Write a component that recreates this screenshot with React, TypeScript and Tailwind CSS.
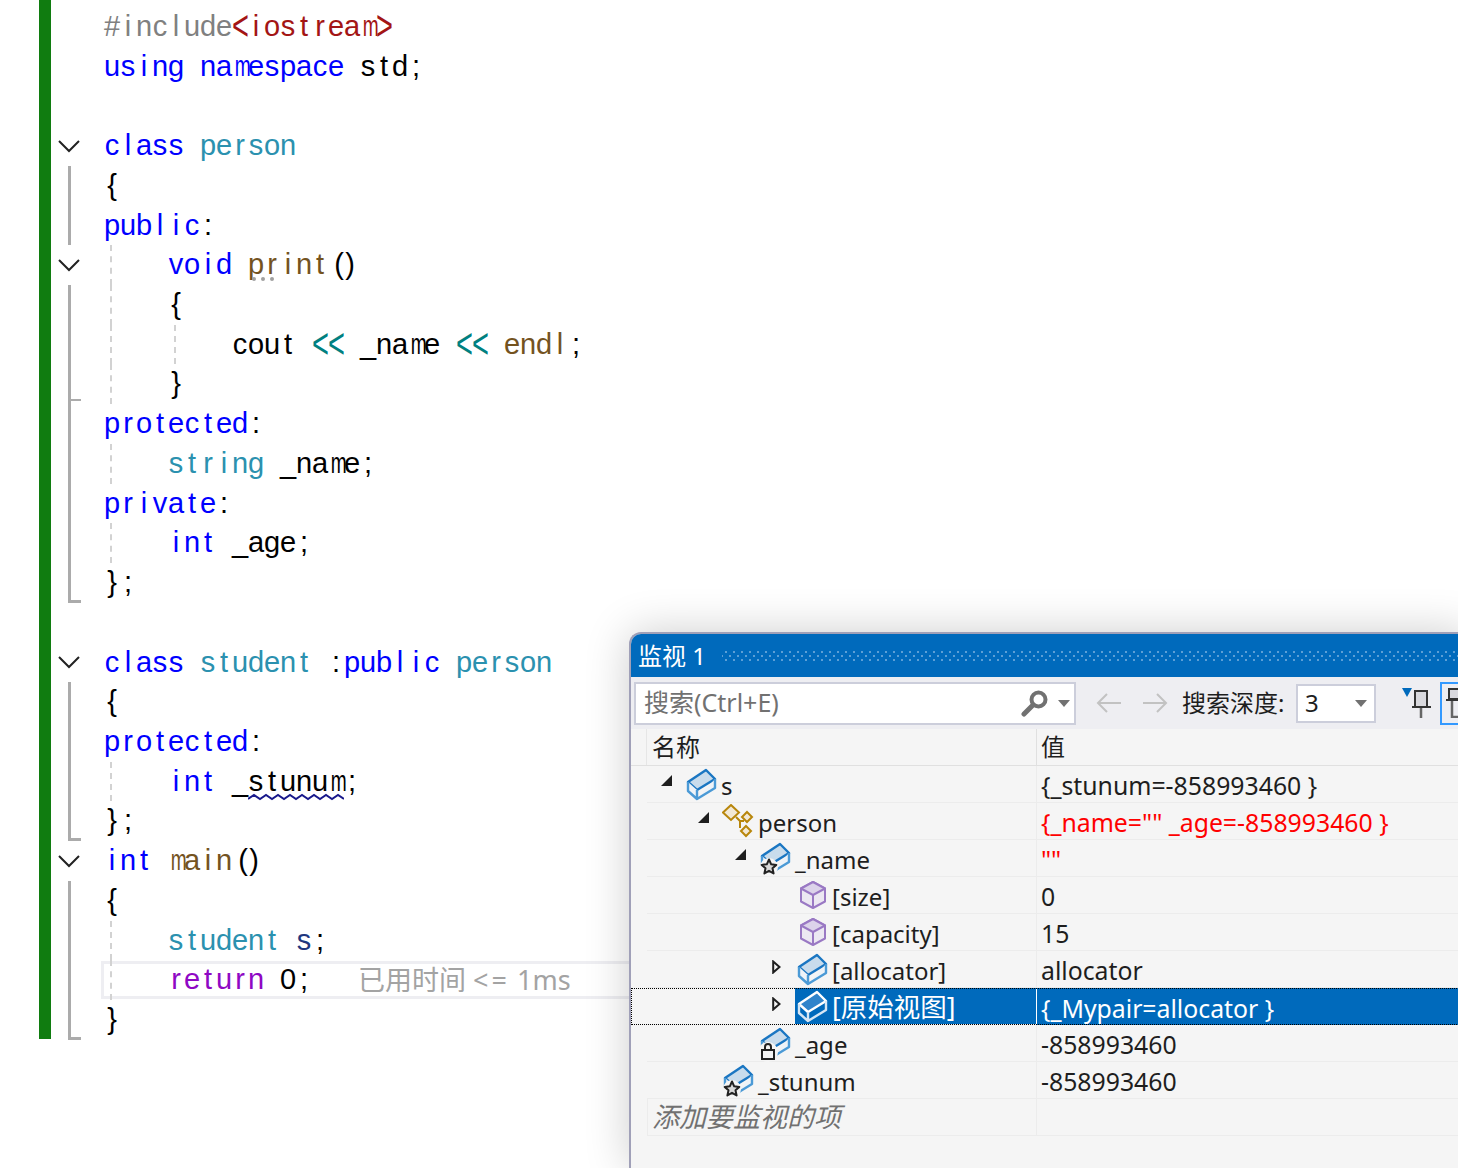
const KW = "text-[#0000ff]";
const TYPE = "text-[#2b91af]";
const FN = "text-[#74531f]";
const OP = "text-[#008080]";
const PLAIN = "text-black";

type Tok = { t: string; c?: string; deco?: "dots" | "squiggle" };
type Line = { fold?: "open" | "v" | "tick" | "end"; guides?: number; toks: Tok[]; current?: boolean };

const lines: Line[] = [
  { toks: [{ t: "#include", c: "text-[#808080]" }, { t: "<iostream>", c: "text-[#a31515]" }] },
  { toks: [{ t: "using namespace", c: KW }, { t: " std;" }] },
  { toks: [] },
  { fold: "open", toks: [{ t: "class", c: KW }, { t: " " }, { t: "person", c: TYPE }] },
  { fold: "v", toks: [{ t: "{" }] },
  { fold: "v", toks: [{ t: "public", c: KW }, { t: ":" }] },
  { fold: "open", guides: 1, toks: [{ t: "    " }, { t: "void", c: KW }, { t: " " }, { t: "pr", c: FN, deco: "dots" }, { t: "int", c: FN }, { t: "()" }] },
  { fold: "v", guides: 1, toks: [{ t: "    {" }] },
  { fold: "v", guides: 2, toks: [{ t: "        cout " }, { t: "<<", c: OP }, { t: " _name " }, { t: "<<", c: OP }, { t: " " }, { t: "endl", c: FN }, { t: ";" }] },
  { fold: "tick", guides: 1, toks: [{ t: "    }" }] },
  { fold: "v", toks: [{ t: "protected", c: KW }, { t: ":" }] },
  { fold: "v", guides: 1, toks: [{ t: "    " }, { t: "string", c: TYPE }, { t: " _name;" }] },
  { fold: "v", toks: [{ t: "private", c: KW }, { t: ":" }] },
  { fold: "v", guides: 1, toks: [{ t: "    " }, { t: "int", c: KW }, { t: " _age;" }] },
  { fold: "end", toks: [{ t: "};" }] },
  { toks: [] },
  { fold: "open", toks: [{ t: "class", c: KW }, { t: " " }, { t: "student", c: TYPE }, { t: " :" }, { t: "public", c: KW }, { t: " " }, { t: "person", c: TYPE }] },
  { fold: "v", toks: [{ t: "{" }] },
  { fold: "v", toks: [{ t: "protected", c: KW }, { t: ":" }] },
  { fold: "v", guides: 1, toks: [{ t: "    " }, { t: "int", c: KW }, { t: " _" }, { t: "stunum", deco: "squiggle" }, { t: ";" }] },
  { fold: "end", toks: [{ t: "};" }] },
  { fold: "open", toks: [{ t: "int", c: KW }, { t: " " }, { t: "main", c: FN }, { t: "()" }] },
  { fold: "v", toks: [{ t: "{" }] },
  { fold: "v", guides: 1, toks: [{ t: "    " }, { t: "student", c: TYPE }, { t: " " }, { t: "s", c: "text-[#1f377f]" }, { t: ";" }] },
  { fold: "v", guides: 1, current: true, toks: [{ t: "    " }, { t: "return", c: "text-[#8f08c4]" }, { t: " 0;" }] },
  { fold: "end", toks: [{ t: "}" }] },
];

function Fold({ kind }: { kind?: Line["fold"] }) {
  if (kind === "open") {
    return (
      <svg width="24" height="14" viewBox="0 0 24 14" className="ml-[6px]">
        <path d="M2 2 L12 12 L22 2" fill="none" stroke="#222222" strokeWidth="2" />
      </svg>
    );
  }
  if (kind === "v") return <div className="ml-[17px] h-full w-[3px] bg-[#ababab]" />;
  if (kind === "tick") {
    return (
      <div className="ml-[17px] h-full w-[13px] border-l-[3px] border-[#ababab]">
        <div className="mt-[35px] h-[2px] bg-[#ababab]" />
      </div>
    );
  }
  if (kind === "end") return <div className="ml-[17px] h-full w-[13px] border-b-[3px] border-l-[3px] border-[#ababab]" />;
  return null;
}

function Squiggle() {
  return (
    <svg width="96" height="8" viewBox="0 0 96 8" className="absolute left-0 top-[31px]">
      <path
        d="M0 6 L6 2 L12 6 L18 2 L24 6 L30 2 L36 6 L42 2 L48 6 L54 2 L60 6 L66 2 L72 6 L78 2 L84 6 L90 2 L96 6"
        fill="none"
        stroke="#1a1a8c"
        strokeWidth="2"
      />
    </svg>
  );
}

// the editor font sits every glyph in a 16px cell, a few glyphs need nudging to fit
function cellClass(ch: string) {
  if (ch === "m") return "scale-x-[0.66]";
  if (ch === "<" || ch === ">") return "scale-y-[1.45] font-light";
  if (ch === "(") return "translate-x-[3px]";
  if (ch === ")") return "-translate-x-[2px]";
  return "";
}

function Cells({ text }: { text: string }) {
  return (
    <>
      {text.split("").map((ch, i) => (
        <span key={i} className={`inline-block w-[16px] text-center ${cellClass(ch)}`}>
          {ch}
        </span>
      ))}
    </>
  );
}

function Editor() {
  return (
    <div className="ml-[39px] h-[1039px] border-l-[12px] border-[#107c10] pt-[7px] font-['Liberation_Sans',sans-serif] text-[29px] leading-[39.72px] whitespace-pre">
      {lines.map((line, i) => (
        <div key={i} className="flex h-[39.72px] items-center">
          <div className="flex h-full w-[53px] shrink-0 items-center">
            <Fold kind={line.fold} />
          </div>
          <div className="relative flex h-full flex-1 items-center">
            {line.current && <div className="absolute inset-y-[1px] -left-[3px] right-0 border-y-[3px] border-l-[3px] border-[#eeeef2]" />}
            {line.guides && <div className="absolute inset-y-0 left-[6px] border-l-2 border-dashed border-[#d2d2d2]" />}
            {line.guides === 2 && <div className="absolute inset-y-0 left-[70px] border-l-2 border-dashed border-[#d2d2d2]" />}
            <div className="relative">
              {line.toks.map((tok, j) => (
                <span key={j} className={`relative inline-block ${tok.c ?? PLAIN}`}>
                  <Cells text={tok.t} />
                  {tok.deco === "squiggle" && <Squiggle />}
                  {tok.deco === "dots" && (
                    <span className="absolute left-[4px] top-[32px] flex gap-[5px]">
                      <span className="size-[4px] rounded-full bg-[#a0a0a0]" />
                      <span className="size-[4px] rounded-full bg-[#a0a0a0]" />
                      <span className="size-[4px] rounded-full bg-[#a0a0a0]" />
                    </span>
                  )}
                </span>
              ))}
            </div>
            {line.current && (
              <span className="relative ml-[46px] font-['Noto_Sans','Noto_Sans_CJK_SC',sans-serif] text-[27px] text-[#a3a3a3]">
                已用时间 <span className="tracking-[3px]">&lt;=</span> 1ms
              </span>
            )}
          </div>
        </div>
      ))}
    </div>
  );
}

function Box({ selected, badge }: { selected?: boolean; badge?: "star" | "lock" }) {
  const top = selected ? "#2f84cb" : "#c9dcec";
  const stroke = selected ? "#ffffff" : "#1a76c2";
  const side = selected ? "#d5e6f5" : "#4b9ad6";
  return (
    <svg width="30" height="32" viewBox="0 0 30 32" className="mt-[1px] overflow-visible">
      <polygon points="1,13 19,1 28,10 10,21" fill={top} stroke={stroke} strokeWidth="2.4" strokeLinejoin="round" />
      <path d="M1 13 V22 L10 30 V21 M10 30 L28 19 V10" fill={selected ? "none" : "#eef3f8"} stroke={side} strokeWidth="2.4" strokeLinejoin="round" />
      {badge === "star" && (
        <g>
          <circle cx="8" cy="24" r="9" fill="#f5f5f5" />
          <polygon
            points="8,16.5 10.2,21.3 15.3,21.9 11.5,25.3 12.6,30.4 8,27.8 3.4,30.4 4.5,25.3 0.7,21.9 5.8,21.3"
            fill="#d9d9d9"
            stroke="#222222"
            strokeWidth="2"
            strokeLinejoin="round"
          />
        </g>
      )}
      {badge === "lock" && (
        <g>
          <circle cx="7" cy="24" r="10" fill="#f5f5f5" />
          <rect x="1" y="22" width="12" height="9" fill="#f5f5f5" stroke="#222222" strokeWidth="2" />
          <path d="M4 22 V19 A3 3 0 0 1 10 19 V22" fill="none" stroke="#222222" strokeWidth="2" />
        </g>
      )}
    </svg>
  );
}

function Cube() {
  return (
    <svg width="26" height="28" viewBox="0 0 26 28" className="ml-[2px]">
      <polygon points="13,1 25,7.5 25,20.5 13,27 1,20.5 1,7.5" fill="#ece8f2" stroke="#9a79c4" strokeWidth="2" strokeLinejoin="round" />
      <polygon points="1,7.5 13,14 25,7.5 13,1" fill="#dcd3ea" stroke="#9a79c4" strokeWidth="2" strokeLinejoin="round" />
      <path d="M13 14 V27" stroke="#9a79c4" strokeWidth="2" />
    </svg>
  );
}

function BaseClass() {
  return (
    <svg width="32" height="34" viewBox="0 0 32 34" className="-ml-[2px] shrink-0">
      <path d="M14 13 L18 17 V24 M18 17 H22" fill="none" stroke="#b8860b" strokeWidth="2" />
      <polygon points="9,1 17,8.5 9,16 1,8.5" fill="#f2e8d5" stroke="#b8860b" strokeWidth="2" />
      <polygon points="25,8 30,13 25,18 20,13" fill="#f2e8d5" stroke="#b8860b" strokeWidth="2" />
      <polygon points="24,22 29,27 24,32 19,27" fill="#f2e8d5" stroke="#b8860b" strokeWidth="2" />
    </svg>
  );
}

type Row = {
  indent: string;
  tri?: "open" | "closed";
  icon: "box" | "star" | "lock" | "cube" | "base";
  name: string;
  value: string;
  red?: boolean;
  selected?: boolean;
};

const rows: Row[] = [
  { indent: "pl-[14px]", tri: "open", icon: "box", name: "s", value: "{_stunum=-858993460 }" },
  { indent: "pl-[51px]", tri: "open", icon: "base", name: "person", value: '{_name="" _age=-858993460 }', red: true },
  { indent: "pl-[88px]", tri: "open", icon: "star", name: "_name", value: '""', red: true },
  { indent: "pl-[125px]", icon: "cube", name: "[size]", value: "0" },
  { indent: "pl-[125px]", icon: "cube", name: "[capacity]", value: "15" },
  { indent: "pl-[125px]", tri: "closed", icon: "box", name: "[allocator]", value: "allocator" },
  { indent: "pl-[125px]", tri: "closed", icon: "box", name: "[原始视图]", value: "{_Mypair=allocator }", selected: true },
  { indent: "pl-[88px]", icon: "lock", name: "_age", value: "-858993460" },
  { indent: "pl-[51px]", icon: "star", name: "_stunum", value: "-858993460" },
];

function Triangle({ kind }: { kind?: Row["tri"] }) {
  if (kind === "open") {
    return (
      <svg width="12" height="12" viewBox="0 0 12 12" className="-mt-[6px]">
        <polygon points="11,0 11,11 0,11" fill="#1e1e1e" />
      </svg>
    );
  }
  if (kind === "closed") {
    return (
      <svg width="9" height="14" viewBox="0 0 9 14" className="-mt-[4px]">
        <polygon points="1.2,1.5 7.5,7 1.2,12.5" fill="none" stroke="#1e1e1e" strokeWidth="2" />
      </svg>
    );
  }
  return null;
}

function RowIcon({ row }: { row: Row }) {
  if (row.icon === "cube") return <Cube />;
  if (row.icon === "base") return <BaseClass />;
  if (row.icon === "star") return <Box badge="star" />;
  if (row.icon === "lock") return <Box badge="lock" />;
  return <Box selected={row.selected} />;
}

function WatchRow({ row }: { row: Row }) {
  return (
    <div className={`flex h-[37px] shrink-0 pl-[16px] ${row.selected ? "outline-1 -outline-offset-1 outline-dotted outline-black" : ""}`}>
      <div className={`flex h-full w-[389px] shrink-0 items-stretch border-b border-[#ececec] ${row.indent}`}>
        <div className="flex w-[23px] shrink-0 items-center">
          <Triangle kind={row.tri} />
        </div>
        <div className={`flex flex-1 items-center pl-[3px] ${row.selected ? "bg-[#006abc] text-white" : "text-[#1e1e1e]"}`}>
          <div className="flex w-[34px] shrink-0 items-center">
            <RowIcon row={row} />
          </div>
          <span className={`whitespace-pre pt-[4px] ${row.selected ? "text-[26.5px]" : "text-[24px]"}`}>{row.name}</span>
        </div>
      </div>
      <div
        className={`flex flex-1 items-center border-l pl-[4px] pt-[4px] ${
          row.selected ? "border-white bg-[#006abc] text-white" : `border-b border-[#ececec] ${row.red ? "text-[#ff0000]" : "text-[#1e1e1e]"}`
        }`}
      >
        {row.value}
      </div>
    </div>
  );
}

function Pin() {
  return (
    <svg width="29" height="30" viewBox="0 0 29 30">
      <polygon points="0,0 10,0 5,9" fill="#006abc" />
      <rect x="13" y="3" width="12" height="16" fill="#d9d9de" stroke="#333333" strokeWidth="2" />
      <path d="M10 19 H29" stroke="#333333" strokeWidth="2" />
      <path d="M19 20 V30" stroke="#666666" strokeWidth="2.5" />
    </svg>
  );
}

function PinOff() {
  return (
    <svg width="14" height="30" viewBox="0 0 14 30">
      <rect x="3" y="1" width="14" height="10" fill="#d9d9de" stroke="#333333" strokeWidth="2" />
      <path d="M0 12 H14" stroke="#333333" strokeWidth="2" />
      <path d="M6 13 V30 M6 29 H14" fill="none" stroke="#666666" strokeWidth="2.5" />
    </svg>
  );
}

function Caret() {
  return (
    <svg width="12" height="7" viewBox="0 0 12 7">
      <polygon points="0,0 12,0 6,7" fill="#717171" />
    </svg>
  );
}

function Arrow({ left }: { left?: boolean }) {
  return (
    <svg width="26" height="22" viewBox="0 0 26 22">
      <path d={left ? "M25 11 H2 M11 2 L2 11 L11 20" : "M1 11 H24 M15 2 L24 11 L15 20"} fill="none" stroke="#c2c2c2" strokeWidth="2" />
    </svg>
  );
}

function WatchWindow() {
  return (
    <div className="absolute left-[629px] top-[632px] flex h-[536px] w-[840px] flex-col overflow-hidden rounded-tl-[12px] border-l-2 border-t-2 border-[#a0a0b8] bg-[#f5f5f5] font-['Noto_Sans','Noto_Sans_CJK_SC',sans-serif] text-[24.8px] shadow-[0_0_45px_rgba(0,0,0,0.2)]">
      <div className="flex h-[43px] shrink-0 items-center bg-[#006abc] pl-[7px] text-[24px] text-white">
        <span>监视 1</span>
        <div className="ml-[16px] h-[12px] flex-1 bg-[radial-gradient(circle,#5c9fd6_1px,transparent_1.3px),radial-gradient(circle,#5c9fd6_1px,transparent_1.3px)] bg-[length:8px_8px] bg-[position:0_-2px,4px_2px]" />
      </div>
      <div className="flex h-[52px] shrink-0 items-center bg-[#eeeef2] pl-[3px] text-[24px]">
        <div className="flex h-[43px] w-[442px] shrink-0 items-center border-2 border-[#cccedb] bg-white pl-[8px] text-[#717171]">
          <span className="flex-1 text-[25px]">搜索(Ctrl+E)</span>
          <svg width="28" height="28" viewBox="0 0 28 28" className="mr-[9px]">
            <circle cx="17.5" cy="10.5" r="7" fill="none" stroke="#717171" strokeWidth="4" />
            <path d="M12 16 L3 25" stroke="#717171" strokeWidth="5" strokeLinecap="round" />
          </svg>
          <div className="mr-[4px]">
            <Caret />
          </div>
        </div>
        <div className="ml-[20px] flex">
          <Arrow left />
        </div>
        <div className="ml-[20px] flex">
          <Arrow />
        </div>
        <span className="ml-[14px] w-[103px] shrink-0 text-[#1e1e1e]">搜索深度:</span>
        <div className="ml-[11px] flex h-[39px] w-[80px] shrink-0 items-center justify-between border-2 border-[#cccedb] bg-white pl-[7px] pr-[7px] text-[#1e1e1e]">
          <span>3</span>
          <Caret />
        </div>
        <div className="ml-[13px] h-[35px] w-[2px] bg-[#cccedb]" />
        <div className="ml-[13px] flex">
          <Pin />
        </div>
        <div className="ml-[9px] flex h-[43px] w-[30px] shrink-0 items-center border-2 border-[#3399ff] pl-[4px]">
          <PinOff />
        </div>
      </div>
      <div className="flex h-[37px] shrink-0 items-center border-b border-[#e0e0e0] text-[24px] text-[#1e1e1e]">
        <div className="h-full w-[16px] shrink-0 border-r border-[#e6e6e6]" />
        <div className="w-[389px] shrink-0 pl-[5px]">名称</div>
        <div className="flex h-full flex-1 items-center border-l border-[#e0e0e0] pl-[4px]">值</div>
      </div>
      {rows.map((row) => (
        <WatchRow key={row.name} row={row} />
      ))}
      <div className="flex h-[37px] shrink-0 pl-[16px]">
        <div className="flex h-full w-[389px] shrink-0 items-center border-b border-l border-[#ececec] pl-[4px] text-[27px] text-[#717171] italic">
          添加要监视的项
        </div>
        <div className="h-full flex-1 border-b border-l border-[#ececec]" />
      </div>
    </div>
  );
}

export default function App() {
  return (
    <div className="relative h-[1168px] w-[1458px] overflow-hidden bg-white">
      <Editor />
      <WatchWindow />
    </div>
  );
}
